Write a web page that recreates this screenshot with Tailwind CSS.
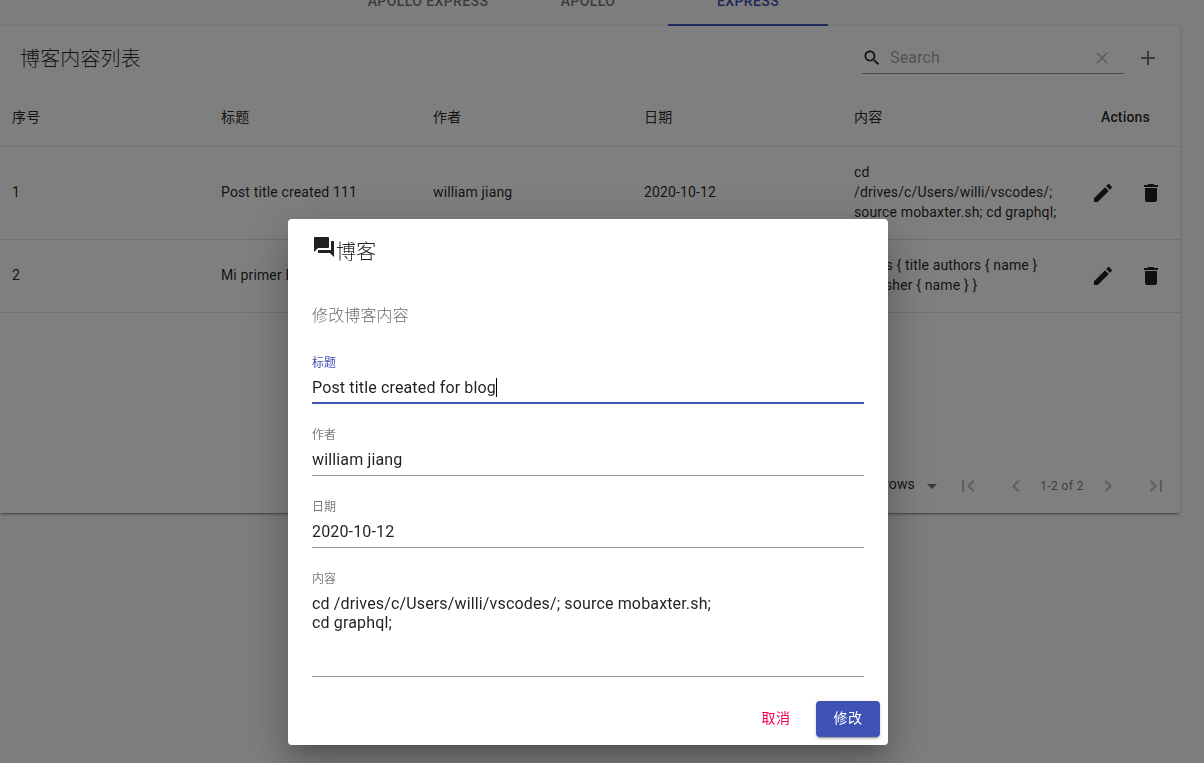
<!DOCTYPE html>
<html lang="zh-CN">
<head>
<meta charset="utf-8">
<title>博客内容列表</title>
<script src="https://cdn.jsdelivr.net/npm/@tailwindcss/browser@4"></script>
</head>
<body class="h-[763px] w-[1204px] overflow-hidden bg-[#fafafa] font-['Roboto','Noto_Sans_CJK_SC',sans-serif] text-black/87">
<svg class="hidden">
  <symbol id="edit" viewBox="0 0 24 24"><path d="M3 17.25V21h3.75L17.81 9.94l-3.75-3.75L3 17.25zM20.71 7.04c.39-.39.39-1.02 0-1.41l-2.34-2.34a.9959.9959 0 0 0-1.41 0l-1.83 1.83 3.75 3.75 1.83-1.83z"/></symbol>
  <symbol id="delete" viewBox="0 0 24 24"><path d="M6 19c0 1.1.9 2 2 2h8c1.1 0 2-.9 2-2V7H6v12zM19 4h-3.5l-1-1h-5l-1 1H5v2h14V4z"/></symbol>
</svg>

<div class="h-[26px] overflow-hidden">
  <div class="-mt-[22px] ml-[348px] flex h-12 text-sm font-medium tracking-[0.4px] text-black/54">
    <div class="flex w-40 items-center justify-center pb-[3px]">APOLLO EXPRESS</div>
    <div class="flex w-40 items-center justify-center pb-[3px]">APOLLO</div>
    <div class="flex w-40 items-center justify-center border-b-2 border-[#3f51b5] pb-px text-[#3f51b5]">EXPRESS</div>
  </div>
</div>

<div class="flex h-[487px] w-[1180px] flex-col rounded-r bg-white shadow-[0_3px_1px_-2px_rgba(0,0,0,0.2),0_2px_2px_0_rgba(0,0,0,0.14),0_1px_5px_0_rgba(0,0,0,0.12)]">
  <div class="flex h-16 items-center pl-5 pr-5">
    <h6 class="flex-1 pt-0.5 text-xl leading-8 font-light tracking-[0.15px]">博客内容列表</h6>
    <div class="flex h-8 w-[262px] items-center border-b border-black/42">
      <svg class="mt-px size-5 fill-black/87" viewBox="0 0 24 24"><path d="M15.5 14h-.79l-.28-.27C15.41 12.59 16 11.11 16 9.5 16 5.91 13.09 3 9.5 3S3 5.91 3 9.5 5.91 16 9.5 16c1.61 0 3.09-.59 4.23-1.57l.27.28v.79l5 4.99L20.49 19l-4.99-5zm-6 0C7.01 14 5 11.99 5 9.5S7.01 5 9.5 5 14 7.01 14 9.5 11.99 14 9.5 14z"/></svg>
      <span class="ml-2 flex-1 text-base tracking-[0.15px] text-black/38">Search</span>
      <svg class="mr-3 size-5 fill-black/26" viewBox="0 0 24 24"><path d="M19 6.41L17.59 5 12 10.59 6.41 5 5 6.41 10.59 12 5 17.59 6.41 19 12 13.41 17.59 19 19 17.59 13.41 12z"/></svg>
    </div>
    <svg class="ml-3 size-6 fill-black/54" viewBox="0 0 24 24"><path d="M19 13h-6v6h-2v-6H5v-2h6V5h2v6h6v2z"/></svg>
  </div>

  <div class="grid h-[57px] grid-cols-[209px_212px_211px_210px_216px_110px] items-center border-b border-[#e0e0e0] pb-0.5 pl-3 text-sm tracking-[0.14px]">
    <div>序号</div><div>标题</div><div>作者</div><div>日期</div><div>内容</div><div class="pl-[31px] font-medium">Actions</div>
  </div>
  <div class="grid h-[93px] grid-cols-[209px_212px_211px_210px_224px_102px] items-center border-b border-[#e0e0e0] pb-0.5 pl-3 text-sm tracking-[0.14px]">
    <div>1</div><div>Post title created 111</div><div>william jiang</div><div>2020-10-12</div>
    <div>cd<br>/drives/c/Users/willi/vscodes/;<br>source mobaxter.sh; cd graphql;</div>
    <div class="flex gap-6 pl-[13px] pt-px"><svg class="size-6 fill-black/87"><use href="#edit"/></svg><svg class="size-6 fill-black/87"><use href="#delete"/></svg></div>
  </div>
  <div class="grid h-[73px] grid-cols-[209px_212px_211px_210px_224px_102px] items-center border-b border-[#e0e0e0] pb-0.5 pl-3 text-sm tracking-[0.14px]">
    <div>2</div><div>Mi primer Blog</div><div>william jiang</div><div>2020-10-12</div>
    <div>books { title authors { name }<br>publisher { name } }</div>
    <div class="flex gap-6 pl-[13px] pt-px"><svg class="size-6 fill-black/87"><use href="#edit"/></svg><svg class="size-6 fill-black/87"><use href="#delete"/></svg></div>
  </div>

  <div class="mt-auto flex h-[54px] items-center justify-end pr-3">
    <span class="mb-1 text-sm tracking-[0.14px]">5 rows</span>
    <svg class="ml-[5px] size-6 fill-black/54" viewBox="0 0 24 24"><path d="M7 10l5 5 5-5z"/></svg>
    <svg class="ml-3 size-6 fill-black/26" viewBox="0 0 24 24"><path d="M18.41 16.59L13.82 12l4.59-4.59L17 6l-6 6 6 6zM6 6h2v12H6z"/></svg>
    <svg class="ml-6 size-6 fill-black/26" viewBox="0 0 24 24"><path d="M15.41 7.41L14 6l-6 6 6 6 1.41-1.41L10.83 12z"/></svg>
    <span class="w-[68px] text-center text-xs tracking-[0.4px] text-black/54">1-2 of 2</span>
    <svg class="size-6 fill-black/26" viewBox="0 0 24 24"><path d="M10 6L8.59 7.41 13.17 12l-4.58 4.59L10 18l6-6z"/></svg>
    <svg class="ml-6 size-6 fill-black/26" viewBox="0 0 24 24"><path d="M5.59 7.41L10.18 12l-4.59 4.59L7 18l6-6-6-6zM16 6h2v12h-2z"/></svg>
  </div>
</div>

<div class="fixed inset-0 bg-black/50 pl-[288px] pt-[219px]">
  <div class="flex h-[526px] w-[600px] flex-col rounded bg-white px-6 pt-4 shadow-[0_11px_15px_-7px_rgba(0,0,0,0.2),0_24px_38px_3px_rgba(0,0,0,0.14),0_9px_46px_8px_rgba(0,0,0,0.12)]">
    <h2 class="flex h-8 text-xl leading-8 font-light tracking-[0.15px]">
      <svg class="size-6" viewBox="0 0 24 24"><path fill="#212121" d="M21 6h-2v9H6v2c0 .55.45 1 1 1h11l4 4V7c0-.55-.45-1-1-1zm-4 6V3c0-.55-.45-1-1-1H3c-.55 0-1 .45-1 1v14l4-4h10c.55 0 1-.45 1-1z"/></svg>
      <span class="pt-px">博客</span>
    </h2>
    <p class="mt-[35px] text-base leading-7 font-light tracking-[0.15px] text-black/60">修改博客内容</p>

    <div class="mt-[25px] flex h-[49px] flex-col border-b-2 border-[#3f51b5]">
      <label class="text-xs leading-4 text-[#3f51b5]">标题</label>
      <div class="mt-[7px] flex items-center text-base leading-[19px] tracking-[0.15px]">Post title created for blog<span class="h-[19px] w-px bg-black"></span></div>
    </div>
    <div class="mt-[23px] flex h-[49px] flex-col border-b border-black/42">
      <label class="text-xs leading-4 text-black/54">作者</label>
      <div class="mt-[7px] text-base leading-[19px] tracking-[0.15px]">william jiang</div>
    </div>
    <div class="mt-[23px] flex h-[49px] flex-col border-b border-black/42">
      <label class="text-xs leading-4 text-black/54">日期</label>
      <div class="mt-[7px] text-base leading-[19px] tracking-[0.15px]">2020-10-12</div>
    </div>
    <div class="mt-[23px] flex h-[106px] flex-col border-b border-black/42">
      <label class="text-xs leading-4 text-black/54">内容</label>
      <div class="mt-[7px] text-base leading-[19px] tracking-[0.15px]">cd /drives/c/Users/willi/vscodes/; source mobaxter.sh;<br>cd graphql;</div>
    </div>

    <div class="-mr-4 mt-6 flex h-9 justify-end gap-2 text-sm leading-[34px] tracking-[0.4px]">
      <button class="w-16 pb-0.5 text-[#f50057]">取消</button>
      <button class="w-16 rounded bg-[#3f51b5] pb-0.5 text-white shadow-[0_3px_1px_-2px_rgba(0,0,0,0.2),0_2px_2px_0_rgba(0,0,0,0.14),0_1px_5px_0_rgba(0,0,0,0.12)]">修改</button>
    </div>
  </div>
</div>
</body>
</html>
